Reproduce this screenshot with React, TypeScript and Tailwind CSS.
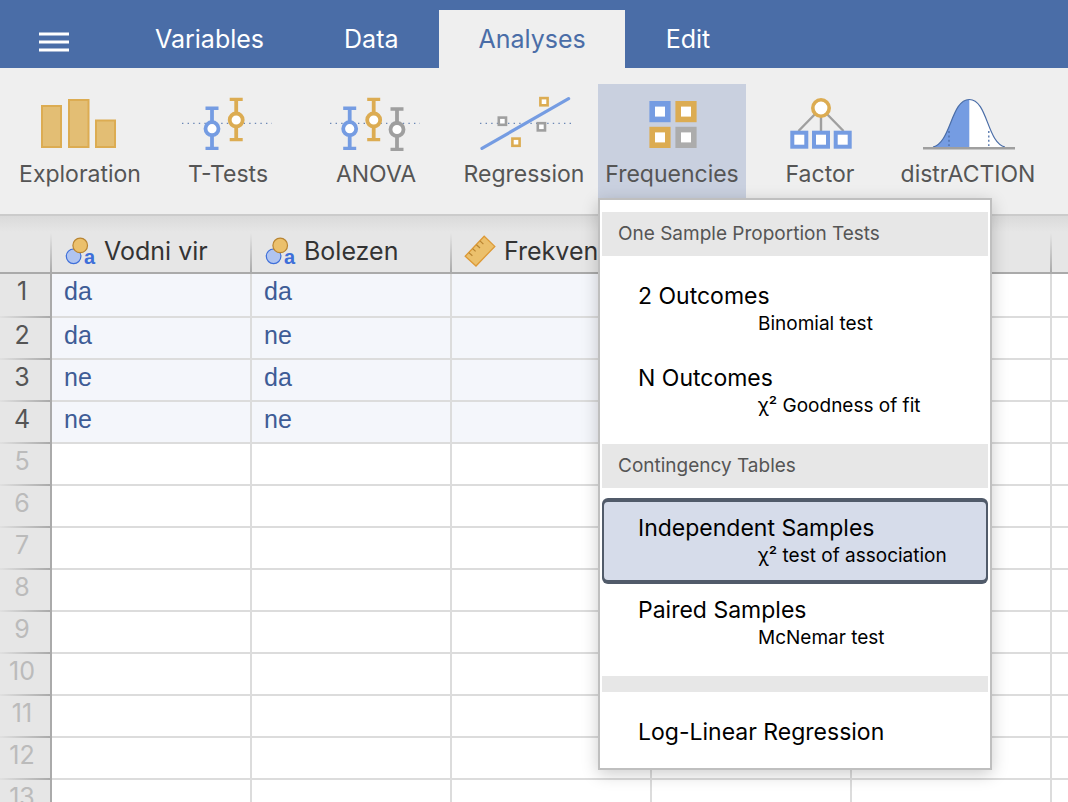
import type { ReactNode } from 'react'

const BLUE = '#759ce2'
const GOLD = '#dcac52'
const GRAY = '#9f9f9f'
const NAVY = '#4a6da7'

const TABS = ['Variables', 'Data', 'Analyses', 'Edit']

interface Column {
  name: string
  type: 'nominal' | 'continuous'
}

const COLUMNS: Column[] = [
  { name: 'Vodni vir', type: 'nominal' },
  { name: 'Bolezen', type: 'nominal' },
  { name: 'Frekvenca', type: 'continuous' }
]

const DATA = [
  ['da', 'da', ''],
  ['da', 'ne', ''],
  ['ne', 'da', ''],
  ['ne', 'ne', '']
]

const ROW_COUNT = 13
const EXTRA_COLUMNS = 3

function Icon({ children }: { children: ReactNode }) {
  return (
    <svg width="96" height="64" viewBox="0 0 96 64" fill="none" aria-hidden="true">
      {children}
    </svg>
  )
}

function DottedLine() {
  return <path d="M2 31.3H92" stroke={NAVY} strokeWidth="1" strokeDasharray="1.4 4.2" />
}

interface ErrorBarProps {
  x: number
  y: number
  top: number
  bottom: number
  color: string
}

function ErrorBar({ x, y, top, bottom, color }: ErrorBarProps) {
  return (
    <g stroke={color}>
      <path d={`M${x} ${top}V${bottom}`} strokeWidth="3.8" />
      <path d={`M${x - 6.5} ${top}h13M${x - 6.5} ${bottom}h13`} strokeWidth="3.4" />
      <circle cx={x} cy={y} r="6.5" fill="#fff" strokeWidth="3.8" />
    </g>
  )
}

interface SquareProps {
  x: number
  y: number
  size: number
  stroke: number
  color: string
}

// x and y are the centre of the square
function Square({ x, y, size, stroke, color }: SquareProps) {
  return (
    <rect
      x={x - size / 2}
      y={y - size / 2}
      width={size}
      height={size}
      fill="#fff"
      stroke={color}
      strokeWidth={stroke}
    />
  )
}

function ExplorationIcon() {
  return (
    <Icon>
      <g fill="#e3be74" stroke={GOLD} strokeWidth="2">
        <rect x="10" y="14" width="19" height="41" />
        <rect x="37" y="8" width="19.5" height="47" />
        <rect x="64" y="28.5" width="19" height="26.5" />
      </g>
    </Icon>
  )
}

function TTestsIcon() {
  return (
    <Icon>
      <DottedLine />
      <ErrorBar x={32} y={36.7} top={16.2} bottom={56.4} color={BLUE} />
      <ErrorBar x={56.2} y={28} top={7.4} bottom={47.6} color={GOLD} />
    </Icon>
  )
}

function AnovaIcon() {
  return (
    <Icon>
      <DottedLine />
      <ErrorBar x={21.7} y={36.7} top={16.2} bottom={56.4} color={BLUE} />
      <ErrorBar x={45.7} y={28} top={7.4} bottom={47.6} color={GOLD} />
      <ErrorBar x={69} y={37.5} top={17} bottom={57.4} color={GRAY} />
    </Icon>
  )
}

function RegressionIcon() {
  return (
    <Icon>
      <path d="M4 31.3H95" stroke={NAVY} strokeWidth="1" strokeDasharray="1.4 4.2" />
      <path d="M6 56.4L92.6 6.6" stroke={BLUE} strokeWidth="3.2" strokeLinecap="round" />
      <Square x={68} y={9.7} size={7.2} stroke={2.6} color={GOLD} />
      <Square x={26.4} y={29.2} size={7.2} stroke={2.6} color={GRAY} />
      <Square x={65.4} y={34.8} size={7.2} stroke={2.6} color={GRAY} />
      <Square x={40} y={50.2} size={7.2} stroke={2.6} color={GOLD} />
    </Icon>
  )
}

function FrequenciesIcon() {
  return (
    <Icon>
      <Square x={36} y={19.6} size={15.6} stroke={5.6} color={BLUE} />
      <Square x={62} y={19.6} size={15.6} stroke={5.6} color={GOLD} />
      <Square x={36} y={45.4} size={15.6} stroke={5.6} color={GOLD} />
      <Square x={62} y={45.4} size={15.6} stroke={5.6} color="#acacac" />
    </Icon>
  )
}

function FactorIcon() {
  return (
    <Icon>
      <path d="M49 16L26.5 39M49 16V39M49 16L71.5 39" stroke={GRAY} strokeWidth="2.4" />
      <circle cx="49" cy="16" r="8.2" fill="#fff" stroke={GOLD} strokeWidth="3.6" />
      <Square x={27.3} y={47.7} size={14} stroke={4} color={BLUE} />
      <Square x={49} y={47.7} size={14} stroke={4} color={BLUE} />
      <Square x={70.7} y={47.7} size={14} stroke={4} color={BLUE} />
    </Icon>
  )
}

function DistractionIcon() {
  return (
    <Icon>
      <path d="M13 55C31 51 31 7.5 49.3 7.5S67 51 85 55Z" fill="#fff" />
      <path d="M13 55C31 51 31 7.5 49.3 7.5V55Z" fill={BLUE} />
      <path d="M13 55C31 51 31 7.5 49.3 7.5S67 51 85 55" stroke={NAVY} strokeWidth="1.2" />
      <path d="M29 39V54M68.8 39V54" stroke={NAVY} strokeWidth="1.3" strokeDasharray="2 2.4" />
      <path d="M3 56.2H95" stroke={GRAY} strokeWidth="2.4" />
    </Icon>
  )
}

function NominalIcon() {
  return (
    <svg width="32" height="32" viewBox="0 0 32 32" aria-hidden="true">
      <circle cx="9.6" cy="21.3" r="7.3" fill="#b0c4f0" stroke="#3e6fd9" strokeWidth="1.2" />
      <circle cx="16.2" cy="10.4" r="7.3" fill="#ebc06c" stroke="#b98532" strokeWidth="1.2" />
      <text x="20" y="29" fill="#3e6fd9" className="font-['Liberation_Sans',sans-serif] text-[20px] font-bold">
        a
      </text>
    </svg>
  )
}

function ContinuousIcon() {
  return (
    <svg width="32" height="32" viewBox="0 0 32 32" aria-hidden="true">
      <path d="M20.2 1.2L30.8 11.4L12 31L1.2 21.2Z" fill="#ebc06c" stroke="#dd9936" strokeWidth="1.3" />
      <path
        d="M4.8 17.6l3.6 3.2M8.6 13.6l3 2.8M12.4 9.8l3.6 3.2M16 5.8l3.4 3.4"
        stroke="#b98532"
        strokeWidth="1.2"
      />
    </svg>
  )
}

const ANALYSES = [
  { name: 'Exploration', icon: <ExplorationIcon /> },
  { name: 'T-Tests', icon: <TTestsIcon /> },
  { name: 'ANOVA', icon: <AnovaIcon /> },
  { name: 'Regression', icon: <RegressionIcon /> },
  { name: 'Frequencies', icon: <FrequenciesIcon /> },
  { name: 'Factor', icon: <FactorIcon /> },
  { name: 'distrACTION', icon: <DistractionIcon /> }
]

interface MenuItemProps {
  title: string
  subtitle?: string
  selected?: boolean
}

function MenuItem({ title, subtitle, selected }: MenuItemProps) {
  return (
    <button
      type="button"
      role="menuitem"
      className={
        'flex w-full flex-col items-start rounded-md border-2 px-[34px] pt-3 text-left leading-7 text-black ' +
        (subtitle ? 'h-[82px] ' : 'h-[52px] ') +
        (selected
          ? 'border-[#515b6a] bg-[#d6dcea] shadow-[0_2px_0_#515b6a,0_-2px_0_#515b6a]'
          : 'border-transparent')
      }
    >
      <span className="text-[23px]">{title}</span>
      {subtitle && <span className="whitespace-nowrap pl-[120px] text-[19px]">{subtitle}</span>}
    </button>
  )
}

function MenuHeading({ children }: { children: ReactNode }) {
  return <div className="bg-[#e7e7e7] px-4 text-[19px] leading-[44px] text-[#555]">{children}</div>
}

function FrequenciesMenu() {
  return (
    <div
      role="menu"
      aria-label="Frequencies"
      className="absolute left-0 top-full z-10 w-[394px] border-2 border-[#bfbfbf] bg-white px-0.5 pt-3 shadow-[0_4px_16px_rgba(0,0,0,0.2)]"
    >
      <MenuHeading>One Sample Proportion Tests</MenuHeading>
      <div className="py-3">
        <MenuItem title="2 Outcomes" subtitle="Binomial test" />
        <MenuItem title="N Outcomes" subtitle="χ² Goodness of fit" />
      </div>
      <MenuHeading>Contingency Tables</MenuHeading>
      <div className="py-3">
        <MenuItem title="Independent Samples" subtitle="χ² test of association" selected />
        <MenuItem title="Paired Samples" subtitle="McNemar test" />
      </div>
      <div role="separator" className="h-4 bg-[#e7e7e7]" />
      <div className="py-3">
        <MenuItem title="Log-Linear Regression" />
      </div>
    </div>
  )
}

function TopBar() {
  return (
    <header className="flex h-[68px] shrink-0 items-end bg-[#4a6da7]">
      <button type="button" aria-label="Menu" className="flex h-[58px] w-[116px] items-center pl-[39px] pt-1.5">
        <svg width="30" height="20" viewBox="0 0 30 20" aria-hidden="true">
          <path d="M0 2h30M0 10h30M0 18h30" stroke="#fff" strokeWidth="2.8" />
        </svg>
      </button>
      <nav className="flex gap-0.5">
        {TABS.map(tab => (
          <button
            key={tab}
            type="button"
            className={
              'h-[58px] px-[39px] pt-0.5 text-[25px] ' +
              (tab === 'Analyses' ? 'bg-[#efefef] text-[#4a6da7]' : 'text-white')
            }
          >
            {tab}
          </button>
        ))}
      </nav>
    </header>
  )
}

function Ribbon() {
  return (
    <div className="flex shrink-0 border-b-2 border-[#cbcbcb] bg-[#efefef] px-1.5 py-4">
      {ANALYSES.map(({ name, icon }) => (
        <div key={name} className="relative w-[148px] shrink-0">
          <button
            type="button"
            className={
              'flex h-[114px] w-full flex-col items-center pt-2 text-[23px] leading-9 text-[#555] ' +
              (name === 'Frequencies' ? 'bg-[#c9d0df]' : '')
            }
          >
            {icon}
            {name}
          </button>
          {name === 'Frequencies' && <FrequenciesMenu />}
        </div>
      ))}
    </div>
  )
}

function Spreadsheet() {
  const total = COLUMNS.length + EXTRA_COLUMNS

  return (
    <main className="min-h-0 flex-1 overflow-hidden bg-white">
      <table className="w-full table-fixed border-separate border-spacing-0">
        <colgroup>
          <col className="w-[52px]" />
          <col className="w-[200px]" />
          <col className="w-[200px]" />
          <col className="w-[200px]" />
          <col className="w-[200px]" />
          <col className="w-[200px]" />
          <col />
        </colgroup>
        <thead>
          <tr className="h-[58px] bg-[linear-gradient(#dadada,#e6e6e6_16px)]">
            {Array.from({ length: total + 1 }, (_, i) => {
              const column = COLUMNS[i - 1]
              return (
                <th
                  key={i}
                  className="border-b-2 border-[#aaa] bg-[linear-gradient(transparent_30%,#aaa)] bg-[length:2px_100%] bg-right bg-no-repeat p-0 text-left font-normal last:bg-none"
                >
                  {column && (
                    <div className="flex items-center gap-2 overflow-hidden pl-3 pt-3.5 text-[25px] leading-10 text-[#333]">
                      {column.type === 'nominal' ? <NominalIcon /> : <ContinuousIcon />}
                      {column.name}
                    </div>
                  )}
                </th>
              )
            })}
          </tr>
        </thead>
        <tbody>
          {Array.from({ length: ROW_COUNT }, (_, row) => {
            const values = DATA[row]
            return (
              <tr key={row} className={row === 0 ? 'h-11' : 'h-[42px]'}>
                <th
                  className={
                    'border-r-2 border-[#aaa] bg-[#e6e6e6] bg-[linear-gradient(to_right,#e0e0e0,#aaa)] bg-[length:100%_2px] bg-bottom bg-no-repeat p-0 pr-1.5 align-top text-[25px] font-normal leading-[35px] ' +
                    (values ? 'text-[#555]' : 'text-[#bbb]')
                  }
                >
                  {row + 1}
                </th>
                {Array.from({ length: total }, (_, col) => (
                  <td
                    key={col}
                    className={
                      "border-b-2 border-r-2 border-[#dcdcdc] p-0 pl-3 align-top font-['Liberation_Sans',sans-serif] text-[25px] leading-[35px] text-[#3e5c96] last:border-r-0 " +
                      (values && col < COLUMNS.length ? 'bg-[#f4f6fb]' : 'bg-white')
                    }
                  >
                    {values?.[col]}
                  </td>
                ))}
              </tr>
            )
          })}
        </tbody>
      </table>
    </main>
  )
}

export default function App() {
  return (
    <div className="flex h-screen flex-col overflow-hidden bg-white font-['Inter',sans-serif]">
      <TopBar />
      <Ribbon />
      <Spreadsheet />
    </div>
  )
}
